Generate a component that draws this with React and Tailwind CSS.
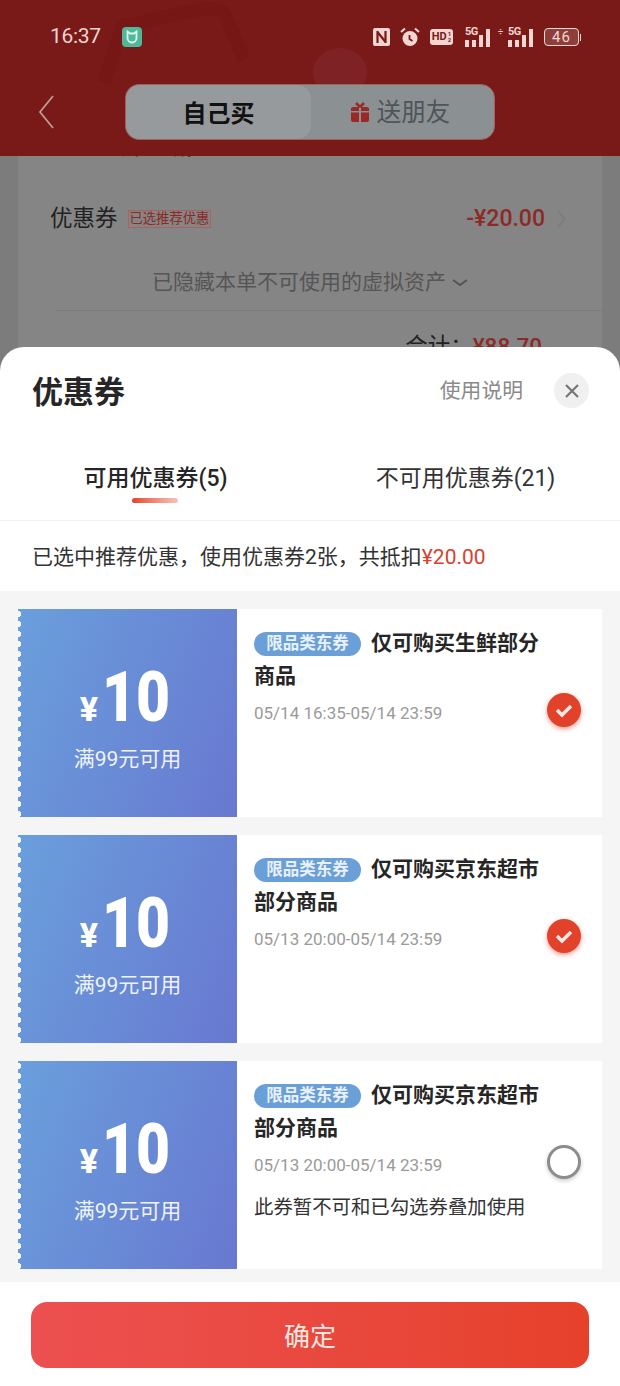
const coupons = [
  {
    title: "仅可购买生鲜部分商品",
    date: "05/14 16:35-05/14 23:59",
    checked: true,
  },
  {
    title: "仅可购买京东超市部分商品",
    date: "05/13 20:00-05/14 23:59",
    checked: true,
  },
  {
    title: "仅可购买京东超市部分商品",
    date: "05/13 20:00-05/14 23:59",
    checked: false,
    note: "此券暂不可和已勾选券叠加使用",
  },
];

function StatusIcons() {
  return (
    <div className="flex items-center text-[#f3d5d2]">
      {/* nfc */}
      <svg width="17" height="18" viewBox="0 0 17 18" className="mr-[10px]">
        <rect width="17" height="18" rx="2" fill="#f3d5d2" />
        <path d="M4.5 3v12M12.5 3v12M4.5 4l8 10" stroke="#7a1a18" strokeWidth="2.2" fill="none" />
      </svg>
      {/* alarm */}
      <svg width="20" height="20" viewBox="0 0 20 20" className="mr-[10px]">
        <circle cx="10" cy="11.5" r="7.5" fill="#f3d5d2" />
        <path d="M1 5l4-3.5M19 5l-4-3.5" stroke="#f3d5d2" strokeWidth="2" />
        <path d="M9.5 8v4l3 2" stroke="#7a1a18" strokeWidth="1.8" fill="none" />
      </svg>
      {/* hd */}
      <div className="flex items-center justify-center w-[23px] h-[16px] rounded-[3px] bg-[#f3d5d2] text-[#7a1a18] mr-[12px]">
        <span className="text-[11px] leading-[16px] font-bold">HD</span>
        <span className="flex flex-col text-[6px] leading-[6px] font-bold ml-[1px]">
          <span>1</span>
          <span>2</span>
        </span>
      </div>
      <Signal className="mr-[7px]" />
      <span className="w-[7px] text-[9px] leading-[9px] font-bold -mt-[10px]">÷</span>
      <Signal className="ml-[3px] mr-[10px]" />
      {/* battery */}
      <div className="w-[35px] h-[18px] rounded-[4px] border border-[#f3d5d2] bg-[#8e3f3c] text-[15px] leading-[16px] tracking-[1px] text-center">
        46
      </div>
      <div className="w-[1px] h-[7px] ml-[1px] bg-[#f3d5d2]" />
    </div>
  );
}

function Signal({ className }) {
  return (
    <div className={`relative w-[26px] h-[19px] ${className}`}>
      <span className="absolute left-0 -top-[2px] text-[11px] leading-[11px] font-bold tracking-[-0.5px]">5G</span>
      <div className="absolute inset-0 flex items-end gap-[3px]">
        <div className="w-[4px] h-[7px] bg-[#f3d5d2]" />
        <div className="w-[4px] h-[7px] bg-[#f3d5d2]" />
        <div className="w-[4px] h-[12px] bg-[#f3d5d2]" />
        <div className="w-[4px] h-[18px] bg-[#f3d5d2]" />
      </div>
    </div>
  );
}

function Header() {
  return (
    <div className="relative z-10 h-[156px] shrink-0 bg-[#7a1a18] overflow-hidden">
      {/* what shows through the dimmed banner */}
      <svg className="absolute inset-0" width="620" height="156" viewBox="0 0 620 156">
        <path d="M104 82 122 26 208 8 224 12 244 60" stroke="#761716" strokeWidth="13" fill="none" />
        <ellipse cx="340" cy="72" rx="27" ry="24" fill="#7f2226" />
      </svg>
      <div className="relative flex items-center justify-between h-[74px] pl-[50px] pr-[39px]">
        <div className="flex items-center">
          <span className="text-[21px] tracking-[-0.3px] text-[#f3d5d2] w-[72px]">16:37</span>
          <div className="w-[20px] h-[20px] rounded-[4px] bg-[#4fb89a] flex items-center justify-center">
            <svg width="14" height="14" viewBox="0 0 14 14">
              <path d="M2.5 1.5v6.5a4.5 4.5 0 0 0 9 0V1.500L9 3.500H5z" fill="none" stroke="#dff3ec" strokeWidth="1.8" />
            </svg>
          </div>
        </div>
        <StatusIcons />
      </div>
      <div className="relative flex items-center h-[56px] mt-[10px]">
        <svg width="16" height="34" viewBox="0 0 16 34" className="ml-[38px]">
          <path d="M15 1 2 17l13 16" stroke="#bf9a96" strokeWidth="1.8" fill="none" />
        </svg>
        <div className="flex w-[370px] h-[56px] ml-[71px] rounded-[14px] bg-[#8b9092] border border-[#a0605c]">
          <div className="w-[185px] pt-[3px] rounded-[14px] bg-[#969a9c] flex items-center justify-center text-[24px] font-bold text-[#111]">
            自己买
          </div>
          <div className="flex-1 pt-[3px] flex items-center justify-center gap-[7px] pr-[5px] text-[24.5px] text-[#4f5558]">
            <svg width="20" height="20" viewBox="0 0 20 20" className="-mt-[3px]">
              <rect x="1" y="5" width="18" height="15" rx="2" fill="#9a2a28" />
              <rect x="9" y="5" width="2" height="15" fill="#8b9092" />
              <rect x="1" y="9" width="18" height="1.500" fill="#8b9092" />
              <path d="M10 5 6 1M10 5l4-4" stroke="#9a2a28" strokeWidth="2.500" />
            </svg>
            送朋友
          </div>
        </div>
      </div>
    </div>
  );
}

function Behind() {
  return (
    <div className="h-[191px] shrink-0 overflow-hidden">
      <div className="mx-[18px] bg-[#858585] h-[300px] -mt-[23px] pl-[32px] text-[#222]">
        <div className="flex items-center h-[28px] pr-[62px] text-[22px] leading-[28px]">
          <span>+ 200 Q币立减</span>
          <span className="ml-[8px] w-[16px] h-[16px] rounded-full bg-[#666]" />
          <span className="ml-auto text-[#555]">-¥1.00</span>
        </div>
        <div className="flex items-center h-[34px] mt-[41px] pr-[35px]">
          <span className="text-[22.5px]">优惠券</span>
          <span className="ml-[10px] h-[18px] px-[1px] border border-[#b0605a] text-[13.3px] leading-[16px] text-[#8a2a26]">
            已选推荐优惠
          </span>
          <span className="ml-auto text-[23px] font-medium text-[#8c2a28]">-¥20.00</span>
          <svg width="10" height="18" viewBox="0 0 10 18" className="ml-[12px]">
            <path d="M1 1l7 8-7 8" stroke="#7b7b7b" strokeWidth="1.500" fill="none" />
          </svg>
        </div>
        <div className="flex items-center justify-center h-[32px] mt-[31px] pr-[32px] text-[21px] text-[#555]">
          已隐藏本单不可使用的虚拟资产
          <svg width="16" height="8" viewBox="0 0 16 8" className="ml-[6px]">
            <path d="M1 1l7 5 7-5" stroke="#555" strokeWidth="2" fill="none" />
          </svg>
        </div>
        <div className="h-[1px] bg-[#7c7c7c] ml-[5px] mt-[11px]" />
        <div className="flex justify-end pr-[60px] pt-[20px] text-[22.5px] leading-[30px]">
          <span>合计：</span>
          <span className="font-medium text-[#8c2a28]">¥88.70</span>
        </div>
      </div>
    </div>
  );
}

function CouponCard({ coupon }) {
  return (
    <div className="flex h-[208px] bg-white">
      <div className="relative w-[219px] shrink-0 flex flex-col items-center bg-linear-[110deg] from-[#6a9fdc] to-[#6878d0] text-white">
        <div className="absolute left-0 inset-y-0 w-[3px] bg-[radial-gradient(circle_at_0_50%,#f5f5f5_3px,transparent_3.5px)] bg-[length:3px_10px]" />
        <div className="flex items-baseline h-[70px] mt-[53px] leading-[70px]">
          <span className="text-[34px] font-extrabold mr-[4px]">¥</span>
          <span className="inline-block text-[70px] font-black origin-left scale-x-[0.84] -mr-[8px]">10</span>
        </div>
        <div className="text-[21px] mt-[12px] leading-[30px] opacity-90">满99元可用</div>
      </div>
      <div className="flex-1 flex items-center">
        <div className="self-start w-[303px] pl-[17px] pt-[18px]">
          <div className="text-[21px] leading-[33px] font-bold text-[#262626]">
            <span className="inline-block align-[1px] w-[107px] h-[24px] mr-[10px] rounded-full bg-[#6a9fd8] text-[16.5px] leading-[24px] font-bold text-center text-[#e8f0fa]">
              限品类东券
            </span>
            {coupon.title}
          </div>
          <div className="text-[17px] leading-[24px] mt-[8px] text-[#9a9a9a]">{coupon.date}</div>
          {coupon.note && (
            <div className="text-[19.4px] leading-[28px] mt-[17px] text-[#333]">{coupon.note}</div>
          )}
        </div>
        <div className="ml-[7px] -mt-[7px]">
          {coupon.checked ? (
            <div className="w-[34px] h-[34px] rounded-full bg-[#e2412a] shadow-[0_2px_5px_rgba(226,65,42,0.5)] flex items-center justify-center">
              <svg width="20" height="16" viewBox="0 0 20 16">
                <path d="M3 8l5 5 9-9" stroke="#fbe9e5" strokeWidth="3.500" fill="none" />
              </svg>
            </div>
          ) : (
            <div className="w-[34px] h-[34px] rounded-full bg-white border-[3px] border-[#8c8c8c] shadow-[0_2px_4px_rgba(0,0,0,0.2)]" />
          )}
        </div>
      </div>
    </div>
  );
}

function Sheet() {
  return (
    <div className="flex-1 flex flex-col bg-white rounded-t-[24px] overflow-hidden">
      <div className="flex items-center h-[90px] pl-[32px] pr-[31px]">
        <span className="text-[31px] mt-[2px] font-bold text-[#262626]">优惠券</span>
        <span className="ml-auto text-[20.8px] text-[#8a8a8a]">使用说明</span>
        <div className="ml-[31px] -mt-[3px] w-[35px] h-[35px] rounded-full bg-[#f0f0f0] flex items-center justify-center">
          <svg width="16" height="16" viewBox="0 0 16 16">
            <path d="M2 2l12 12M14 2 2 14" stroke="#777" strokeWidth="2.200" />
          </svg>
        </div>
      </div>
      <div className="flex h-[84px] border-b border-[#f0f0f0]">
        <div className="relative w-[311px] text-center pt-[26px] text-[23px] leading-[32px] font-medium text-[#262626]">
          可用优惠券(5)
          <div className="absolute left-[132px] top-[61px] w-[46px] h-[5px] rounded-full bg-linear-to-r from-[#e2412a] to-[#f5c4ba]" />
        </div>
        <div className="flex-1 text-center pt-[26px] text-[23px] leading-[32px] text-[#333]">
          不可用优惠券(21)
        </div>
      </div>
      <div className="flex items-center h-[70px] pt-[4px] pl-[32px] text-[21px] text-[#333]">
        已选中推荐优惠，使用优惠券2张，共抵扣<span className="text-[#d9402f]">¥20.00</span>
      </div>
      <div className="h-[691px] shrink-0 bg-[#f5f5f5] pt-[18px] px-[18px] flex flex-col gap-[18px]">
        {coupons.map((coupon, i) => (
          <CouponCard key={i} coupon={coupon} />
        ))}
      </div>
      <div className="flex-1 px-[31px] pt-[20px]">
        <button className="w-full h-[66px] pt-[4px] rounded-[16px] bg-linear-to-r from-[#ec5050] to-[#e6412a] text-[26px] text-[#fbe6e0]">
          确定
        </button>
      </div>
    </div>
  );
}

export default function App() {
  return (
    <div className="w-[620px] h-[1386px] flex flex-col overflow-hidden bg-[#7c7c7c] font-['Roboto','Noto_Sans_CJK_SC',sans-serif]">
      <Header />
      <Behind />
      <Sheet />
    </div>
  );
}
